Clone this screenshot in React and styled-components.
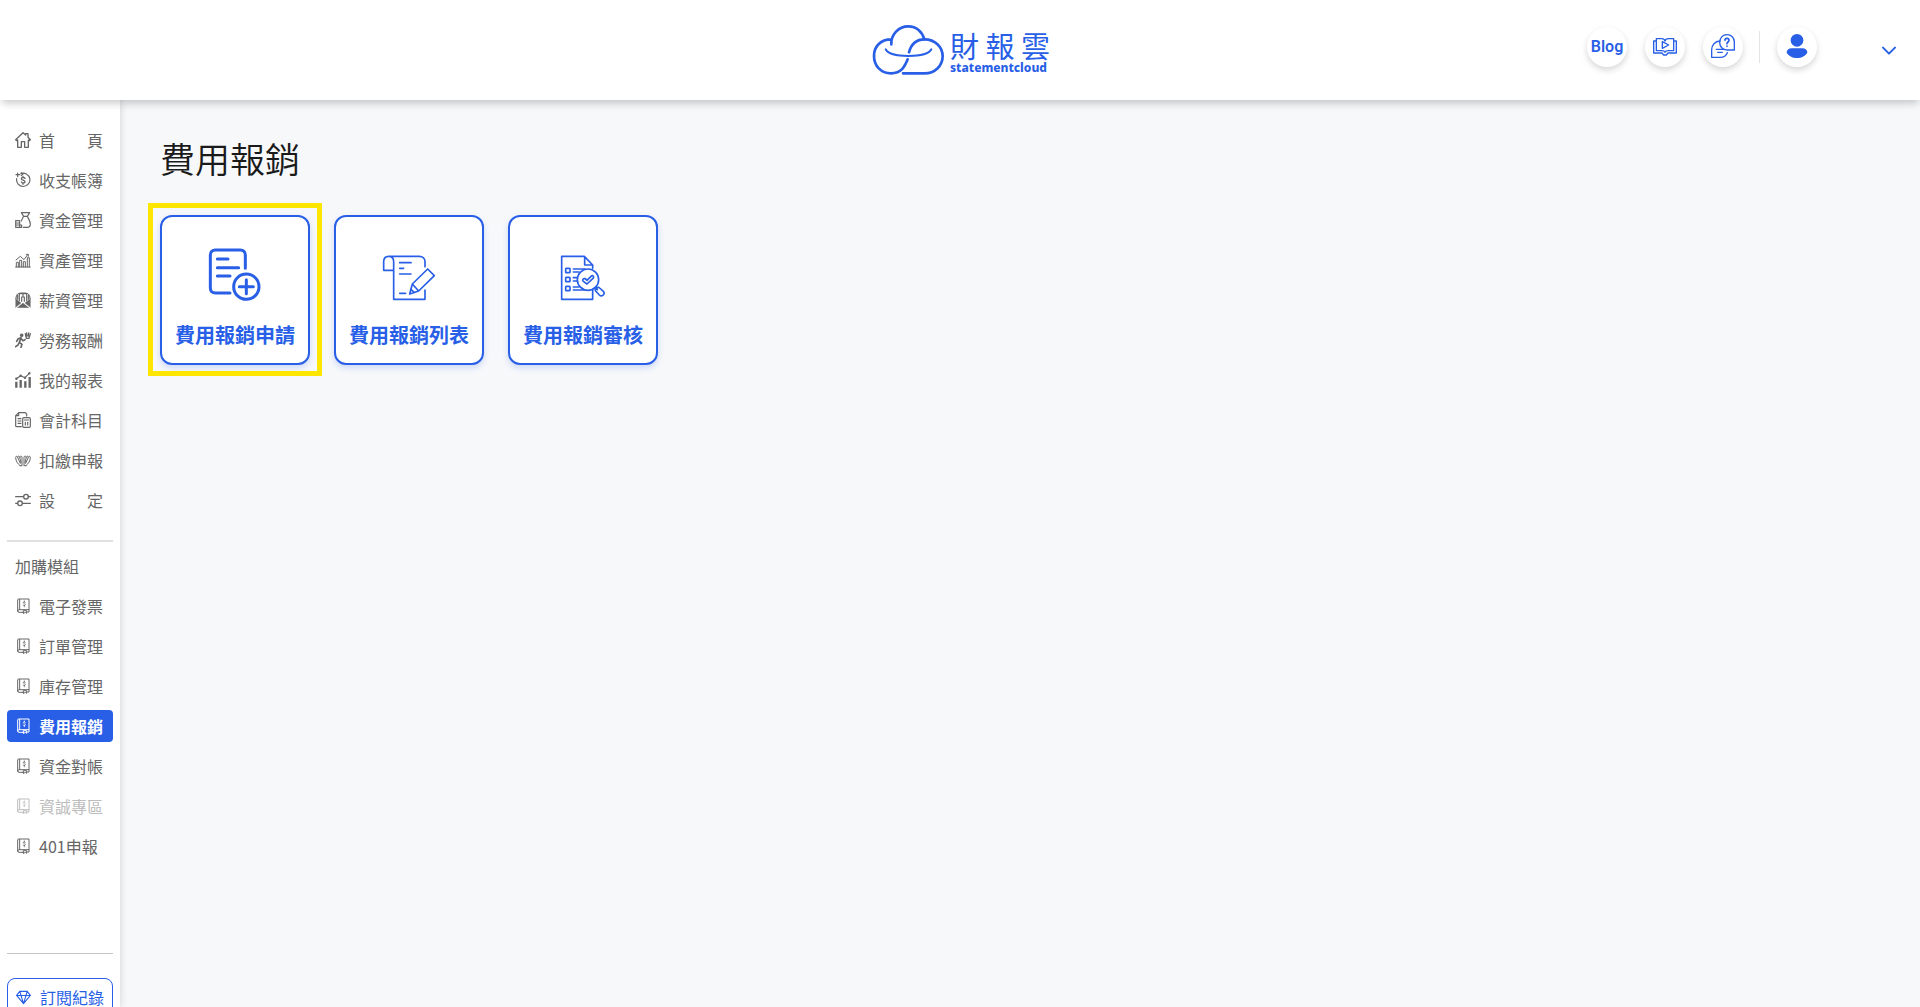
import React from 'react';
import styled, { createGlobalStyle, css } from 'styled-components';

const BLUE = '#285fe6';
const GREY = '#666666';

const GlobalStyle = createGlobalStyle`
  * { box-sizing: border-box; }
  body {
    margin: 0;
    background: #f7f8fa;
    font-family: "Noto Sans CJK TC", "Noto Sans", sans-serif;
    color: #1a1a1a;
  }
  button { font: inherit; cursor: pointer; }
  a { text-decoration: none; color: inherit; }
`;

const Page = styled.div`
  display: flex;
  flex-direction: column;
  height: 100vh;
  overflow: hidden;
`;

const Header = styled.header`
  position: relative;
  z-index: 2;
  flex: none;
  display: grid;
  grid-template-columns: 1fr auto 1fr;
  align-items: center;
  height: 100px;
  padding: 0 20px;
  background: #fff;
  box-shadow: 0 5px 8px -2px rgba(0, 0, 0, 0.22);
`;

const Logo = styled.a`
  grid-column: 2;
  display: flex;
  align-items: center;
  gap: 4px;
  color: ${BLUE};
`;

const LogoText = styled.span`
  display: flex;
  flex-direction: column;
  width: 100px;
  padding-top: 4px;
`;

const LogoName = styled.span`
  display: flex;
  justify-content: space-between;
  font-size: 29px;
  line-height: 32px;
  font-weight: 400;
`;

const LogoSub = styled.span`
  font-family: "Noto Sans", sans-serif;
  font-size: 12px;
  line-height: 14px;
  font-weight: 800;
`;

const Tools = styled.nav`
  grid-column: 3;
  justify-self: end;
  display: flex;
  align-items: center;
  gap: 18px;
  padding-bottom: 6px;
`;

const RoundButton = styled.button`
  display: flex;
  align-items: center;
  justify-content: center;
  width: 40px;
  height: 40px;
  padding: 0 0 2px;
  border: 0;
  border-radius: 50%;
  background: #fff;
  color: ${BLUE};
  font-family: Roboto, sans-serif;
  font-size: 16px;
  font-weight: 600;
  box-shadow: 0 3px 6px rgba(0, 0, 0, 0.16);
`;

const ToolDivider = styled.span`
  width: 1px;
  height: 32px;
  margin-right: -1px;
  margin-left: -2px;
  background: #e4e4e4;
`;

const MenuToggle = styled.button`
  display: flex;
  align-items: center;
  justify-content: center;
  width: 22px;
  height: 20px;
  margin-top: 8px;
  margin-left: 43px;
  padding: 0;
  border: 0;
  background: none;
  color: ${BLUE};
`;

const Body = styled.div`
  flex: 1;
  display: flex;
  min-height: 0;
`;

const Sidebar = styled.aside`
  flex: none;
  width: 120px;
  padding: 24px 7px 0;
  background: #fff;
  box-shadow: 0 0 8px rgba(0, 0, 0, 0.16);
  overflow: hidden;
`;

const NavList = styled.ul`
  display: flex;
  flex-direction: column;
  gap: 8px;
  margin: 0;
  padding: 0;
  list-style: none;
`;

const NavLink = styled.a`
  display: flex;
  align-items: center;
  gap: 8px;
  height: 32px;
  padding: 0 8px;
  border-radius: 4px;
  font-size: 16px;
  line-height: 24px;
  white-space: nowrap;
  color: ${GREY};
  ${(p) => p.$active && css`
    background: ${BLUE};
    color: #fff;
    font-weight: 700;
  `}
  ${(p) => p.$disabled && css`color: #bdbdbd;`}
`;

const NavLabel = styled.span`
  display: flex;
  justify-content: space-between;
  min-width: 64px;
`;

const Divider = styled.hr`
  height: ${(p) => p.$weight}px;
  margin: ${(p) => p.$before}px 0 ${(p) => p.$after}px;
  border: 0;
  background: ${(p) => p.$tone};
`;

const SectionTitle = styled.h2`
  margin: 0 0 8px;
  padding-left: 8px;
  font-size: 16px;
  line-height: 31px;
  font-weight: 400;
  color: ${GREY};
`;

const SubscribeButton = styled.button`
  display: flex;
  align-items: center;
  gap: 9px;
  width: 100%;
  height: 38px;
  padding: 0 8px;
  border: 1px solid ${BLUE};
  border-radius: 8px;
  background: #fff;
  color: ${BLUE};
  font-size: 16px;
  white-space: nowrap;
`;

const Main = styled.main`
  flex: 1;
  min-width: 0;
  padding: 30px 40px;
`;

const Title = styled.h1`
  margin: 0 0 29px;
  font-size: 35px;
  line-height: 56px;
  font-weight: 350;
`;

const Cards = styled.div`
  display: flex;
  flex-wrap: wrap;
  gap: 24px;
`;

const Card = styled.button`
  position: relative;
  display: flex;
  flex-direction: column;
  align-items: center;
  justify-content: flex-end;
  gap: 19px;
  width: 150px;
  height: 150px;
  padding: 0 0 13px;
  border: 2px solid ${BLUE};
  border-radius: 12px;
  background: #fff;
  color: ${BLUE};
  font-size: 20px;
  line-height: 30px;
  font-weight: 700;
  box-shadow: 0 3px 6px rgba(40, 95, 230, 0.2);
  ${(p) => p.$marked && css`
    &::after {
      content: "";
      position: absolute;
      inset: -14px -14px -13px;
      border: 5px solid #ffe600;
      pointer-events: none;
    }
  `}
`;

const Line = ({ size = 16, box = '0 0 48 48', w = 3.5, height, children }) => (
  <svg width={size} height={height || size} viewBox={box} fill="none" stroke="currentColor"
    strokeWidth={w} strokeLinecap="round" strokeLinejoin="round" aria-hidden="true">
    {children}
  </svg>
);

const HomeIcon = () => (
  <Line w={4}>
    <path d="M2 23 24 2l8 7V5h7v11l7 7-3 3-3-2v22H29V29H19v17H8V24l-3 2z" />
  </Line>
);
const LedgerIcon = () => (
  <Line>
    <path d="M17 5a20 20 0 1 1-12 15M8 3v11M3 8h11M19 2l5 4-5 5" />
    <path d="M30 19c-2-4-11-4-11 1s11 4 11 9-9 5-11 1M24 13v4M24 33v4" strokeWidth="4" />
  </Line>
);
const FundsIcon = () => (
  <Line>
    <path d="M19 2h25l-7 11H26zM26 13c-3 6-6 10-7 14M37 13c5 9 10 17 9 25-1 6-4 8-8 8H25" />
    <path d="M2 46V26h12v20zM2 33h12M2 39h18v7H2" />
  </Line>
);
const AssetsIcon = () => (
  <Line w={3}>
    <path d="M2 45h44M4 45V31h6v14M14 45V25h6v20M25 45V29h6v16M37 45V17h6v28" />
    <path d="M3 24l13-11 11 10L38 8M34 7h6v6" />
  </Line>
);
const SalaryIcon = () => (
  <Line>
    <path d="M3 20C3 10 9 3 17 3h14c8 0 14 7 14 17" />
    <path d="M2 20l16 13L2 46zM46 20 30 33l16 13zM7 47l17-14 17 14z" fill="currentColor" strokeWidth="1" />
    <path d="M13 26V5h22v21M20 28V15h8v13M24 7v6M8 10v12M40 10v12" />
  </Line>
);
const LabourIcon = () => (
  <Line w={5}>
    <circle cx="20" cy="10" r="3" fill="currentColor" />
    <path d="M17 17l-8 4-4 7M18 18l-5 13 8 6-3 9M13 31l-4 8-7 5M19 20l5 6 6-3" />
    <path d="M31 5l3 14h8l4-14M35 3l1 9M41 3l-1 9" strokeWidth="4" />
  </Line>
);
const ReportIcon = () => (
  <Line>
    <path d="M4 47V29M17 47V24M31 47V28M44 47V15" strokeWidth="7" strokeLinecap="butt" />
    <path d="M4 20 17 11l13 6L43 4" />
    <g fill="currentColor"><circle cx="4" cy="20" r="2" /><circle cx="17" cy="11" r="2" /><circle cx="30" cy="17" r="2" /><circle cx="43" cy="4" r="2" /></g>
  </Line>
);
const AccountsIcon = () => (
  <Line>
    <path d="M19 44H5c-2 0-3-1-3-3V11l9-9h20l4 4v6M11 2v9H2M9 20h9M9 27h9M9 34h9" />
    <rect x="23" y="17" width="23" height="29" rx="4" />
    <path d="M28 24h13M31 31v8M38 31v8" />
  </Line>
);
const WithholdIcon = () => (
  <Line w={3}>
    <path d="M15 41C8 35 2 27 2 16c0-4 5-4 6 0l8 18M33 41c7-6 13-14 13-25 0-4-5-4-6 0l-8 18" />
    <path d="M8 16c0-5 5-5 6 0l4 16M40 16c0-5-5-5-6 0l-4 16M15 16c0-6 6-5 6 0v23M33 16c0-6-6-5-6 0v23M15 41h6M27 41h6" />
  </Line>
);
const SettingsIcon = () => (
  <Line w={4}>
    <path d="M2 14h23M40 14h6M2 34h6M23 34h23" />
    <circle cx="33" cy="14" r="7" /><circle cx="15" cy="34" r="7" />
  </Line>
);
const ModuleIcon = () => (
  <Line w={3}>
    <path d="M8 40V6c0-2 1-3 3-3h31v32H12c-5 0-5 8 0 8h14M14 4v30M42 35v7h-6" />
    <path d="M26 38h9v8l-4-3-5 3z" />
    <path d="M31 13c-2-3-6-2-6 1s6 3 6 6-5 4-7 1M28 9v3M28 23v3" strokeWidth="2.5" />
  </Line>
);
const DiamondIcon = () => (
  <Line>
    <path d="M12 6h24l10 13-22 26L2 19zM2 19h44M16 19l8 26 8-26M12 6l4 13M36 6l-4 13" />
  </Line>
);

const CloudLogo = () => (
  <Line size={76} height={54} box="28 39 228 162" w={8}>
    <path d="M92 103c-2-28 21-54 51-54 24 0 42 16 48 39M91 88c-30 0-51 21-51 50 0 30 21 52 51 52 32 0 42-22 50-42" />
    <path d="M145 127c6-23 22-39 47-39 30 0 54 22 54 51s-24 51-54 51h-65" />
    <path d="M75 118c8 15 35 20 68 20s61-5 69-20" strokeWidth="6" />
  </Line>
);
const BookIcon = () => (
  <Line size={24} height={19} box="0 0 72 57" w={4}>
    <path d="M10 5h16c6 0 9 3 10 7 1-4 4-7 10-7h16v36H46c-6 0-9 2-10 5-1-3-4-5-10-5H10zM10 12H2v36h25l5 6h8l5-6h25V12h-8" />
    <path d="M28 14v20l19-10z" fill="#fff" />
  </Line>
);
const ChatIcon = () => (
  <Line size={24} box="0 0 72 72" w={4}>
    <path d="M27 21C12 22 2 33 2 47v23h26c11 0 18-6 21-14M16 46h22M20 55h14" />
    <path d="M48 2c13 0 22 9 22 22v24H48c-13 0-22-10-22-23S35 2 48 2z" />
    <path d="M42 19c0-8 12-8 12 0 0 5-6 5-6 10M48 36v1" strokeWidth="5" />
  </Line>
);
const UserIcon = () => (
  <svg width="22" height="24" viewBox="0 0 66 72" fill="currentColor" aria-hidden="true">
    <circle cx="33" cy="19" r="19" />
    <path d="M17 43h32c9 0 15 5 15 13-5 9-17 16-31 16S7 65 2 56c0-8 6-13 15-13z" />
  </svg>
);
const ChevronIcon = () => (
  <Line size={16} height={10} box="0 0 48 30" w={6}><path d="M6 5l18 18L42 5" /></Line>
);

const ApplyIcon = () => (
  <Line size={54} box="0 0 162 162" w={9}>
    <path d="M66 138H22c-9 0-15-6-15-15V24C7 15 13 9 22 9h75c9 0 15 6 15 15v40" />
    <path d="M28 36h32M28 62h64M28 87h38" />
    <circle cx="115" cy="119" r="38" /><path d="M115 98v42M94 119h42" />
  </Line>
);
const ListIcon = () => (
  <Line size={54} height={46} box="0 0 162 138" w={5}>
    <path d="M35 46H5V20C5 10 11 4 20 4s15 6 15 16v113h94v-28M20 4h92c10 0 17 7 17 16v15" />
    <path d="M53 23h34M53 40h12M53 57h34M53 115h18" />
    <path d="M83 117l8-30 46-45 20 20-47 46zM91 87l19 21M86 102l11 11" />
  </Line>
);
const ReviewIcon = () => (
  <Line size={46} height={46} box="0 0 138 138" w={5}>
    <path d="M98 40V30L73 4H5v129h93v-31M74 5v25h24" />
    <rect x="17" y="40" width="13" height="13" rx="2" /><rect x="17" y="67" width="13" height="13" rx="2" /><rect x="17" y="94" width="13" height="13" rx="2" />
    <path d="M40 42h34M40 51h17M40 68h11M40 78h11M40 96h17M40 105h34" />
    <circle cx="84" cy="74" r="32" fill="#fff" />
    <path d="M69 73c4-6 9 0 12 3l12-12c5-5 11 1 6 6L81 87 70 79c-2-2-3-4-1-6z" />
    <path d="M106 98l6 6M112 98c-5 0-8 6-5 10l11 12c7 7 19-2 12-11L119 99c-2-2-5-2-7-1z" />
  </Line>
);

const mainNav = [
  { label: ['首', '頁'], Icon: HomeIcon },
  { label: ['收支帳簿'], Icon: LedgerIcon },
  { label: ['資金管理'], Icon: FundsIcon },
  { label: ['資產管理'], Icon: AssetsIcon },
  { label: ['薪資管理'], Icon: SalaryIcon },
  { label: ['勞務報酬'], Icon: LabourIcon },
  { label: ['我的報表'], Icon: ReportIcon },
  { label: ['會計科目'], Icon: AccountsIcon },
  { label: ['扣繳申報'], Icon: WithholdIcon },
  { label: ['設', '定'], Icon: SettingsIcon },
];

const moduleNav = [
  { label: ['電子發票'] },
  { label: ['訂單管理'] },
  { label: ['庫存管理'] },
  { label: ['費用報銷'], active: true },
  { label: ['資金對帳'] },
  { label: ['資誠專區'], disabled: true },
  { label: ['401申報'] },
];

const cards = [
  { label: '費用報銷申請', Icon: ApplyIcon, marked: true },
  { label: '費用報銷列表', Icon: ListIcon },
  { label: '費用報銷審核', Icon: ReviewIcon },
];

const NavItems = ({ items }) => (
  <NavList>
    {items.map(({ label, Icon = ModuleIcon, active, disabled }) => (
      <li key={label.join('')}>
        <NavLink href="#" $active={active} $disabled={disabled}
          aria-current={active ? 'page' : undefined} aria-disabled={disabled}>
          <Icon />
          <NavLabel>{label.map((part) => <span key={part}>{part}</span>)}</NavLabel>
        </NavLink>
      </li>
    ))}
  </NavList>
);

export default function App() {
  return (
    <Page>
      <GlobalStyle />
      <Header>
        <Logo href="#">
          <CloudLogo />
          <LogoText>
            <LogoName><span>財</span><span>報</span><span>雲</span></LogoName>
            <LogoSub>statementcloud</LogoSub>
          </LogoText>
        </Logo>
        <Tools>
          <RoundButton>Blog</RoundButton>
          <RoundButton aria-label="教學影片"><BookIcon /></RoundButton>
          <RoundButton aria-label="常見問題"><ChatIcon /></RoundButton>
          <ToolDivider />
          <RoundButton aria-label="帳號"><UserIcon /></RoundButton>
          <MenuToggle aria-label="展開選單"><ChevronIcon /></MenuToggle>
        </Tools>
      </Header>
      <Body>
        <Sidebar>
          <NavItems items={mainNav} />
          <Divider $weight={2} $before={24} $after={9} $tone="#e0e0e0" />
          <SectionTitle>加購模組</SectionTitle>
          <NavItems items={moduleNav} />
          <Divider $weight={1} $before={91} $after={24} $tone="#c4c4c4" />
          <SubscribeButton><DiamondIcon />訂閱紀錄</SubscribeButton>
        </Sidebar>
        <Main>
          <Title>費用報銷</Title>
          <Cards>
            {cards.map(({ label, Icon, marked }) => (
              <Card key={label} $marked={marked}><Icon />{label}</Card>
            ))}
          </Cards>
        </Main>
      </Body>
    </Page>
  );
}
